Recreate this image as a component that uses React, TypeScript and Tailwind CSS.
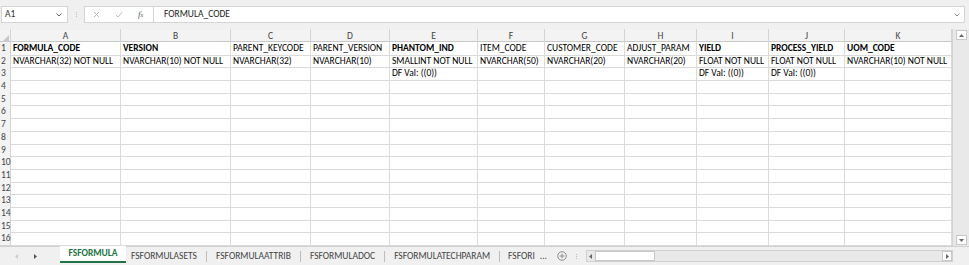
import React from 'react';

const cols = [
  { name: 'A', w: 110 },
  { name: 'B', w: 110 },
  { name: 'C', w: 80 },
  { name: 'D', w: 79 },
  { name: 'E', w: 88 },
  { name: 'F', w: 67 },
  { name: 'G', w: 80 },
  { name: 'H', w: 72 },
  { name: 'I', w: 72 },
  { name: 'J', w: 76 },
  { name: 'K', w: 107 },
];

const headerRow = [
  { t: 'FORMULA_CODE', b: true },
  { t: 'VERSION', b: true },
  { t: 'PARENT_KEYCODE' },
  { t: 'PARENT_VERSION' },
  { t: 'PHANTOM_IND', b: true },
  { t: 'ITEM_CODE' },
  { t: 'CUSTOMER_CODE' },
  { t: 'ADJUST_PARAM' },
  { t: 'YIELD', b: true },
  { t: 'PROCESS_YIELD', b: true },
  { t: 'UOM_CODE', b: true },
];

const typeRow = [
  'NVARCHAR(32) NOT NULL',
  'NVARCHAR(10) NOT NULL',
  'NVARCHAR(32)',
  'NVARCHAR(10)',
  'SMALLINT NOT NULL',
  'NVARCHAR(50)',
  'NVARCHAR(20)',
  'NVARCHAR(20)',
  'FLOAT NOT NULL',
  'FLOAT NOT NULL',
  'NVARCHAR(10) NOT NULL',
];

const dfRow = ['', '', '', '', 'DF Val: ((0))', '', '', '', 'DF Val: ((0))', 'DF Val: ((0))', ''];

const rows: { t: string; b?: boolean }[][] = [
  headerRow,
  typeRow.map((t) => ({ t })),
  dfRow.map((t) => ({ t })),
  ...Array.from({ length: 13 }, () => cols.map(() => ({ t: '' }))),
];

const tabs = ['FSFORMULASETS', 'FSFORMULAATTRIB', 'FSFORMULADOC', 'FSFORMULATECHPARAM'];

const gridCols = 'grid grid-cols-[11px_110px_110px_80px_79px_88px_67px_80px_72px_72px_76px_107px]';

const App = () => {
  return (
    <div
      className="w-[969px] h-[265px] bg-[#f0f0f0] overflow-hidden flex flex-col text-[9.5px] text-black"
      style={{ fontFamily: "Carlito, 'Liberation Sans', Arial, sans-serif" }}
    >
      {/* Formula bar */}
      <div className="h-[29px] flex items-center pl-[1px] pr-[4px]">
        <div className="w-[67px] h-[17px] bg-white border border-[#d4d4d4] flex items-center justify-between pl-[3px] pr-[5px] text-[#333]">
          <span>A1</span>
          <svg width="6" height="4" viewBox="0 0 6 4">
            <path d="M0.5 0.5 L3 3 L5.5 0.5" fill="none" stroke="#666" strokeWidth="1" />
          </svg>
        </div>
        <div className="w-[16px] flex flex-col items-center gap-[1px]">
          <span className="w-[1px] h-[1px] bg-[#bbb]" />
          <span className="w-[1px] h-[1px] bg-[#bbb]" />
          <span className="w-[1px] h-[1px] bg-[#bbb]" />
        </div>
        <div className="h-[17px] w-[70px] bg-white border border-[#d4d4d4] flex items-center gap-[15px] pl-[8px]">
          <svg width="7" height="7" viewBox="0 0 7 7">
            <path d="M1 1 L6 6 M6 1 L1 6" stroke="#b5b5b5" strokeWidth="0.9" />
          </svg>
          <svg width="8" height="7" viewBox="0 0 8 7">
            <path d="M0.8 3.8 L3 6 L7.2 1" fill="none" stroke="#b5b5b5" strokeWidth="0.9" />
          </svg>
          <span className="italic text-[#555] text-[9px]" style={{ fontFamily: "'Liberation Serif', serif" }}>
            f<span className="text-[6px]">x</span>
          </span>
        </div>
        <div className="flex-1 h-[17px] bg-white border border-l-0 border-[#d4d4d4] flex items-center justify-between pl-[10px] pr-[4px] text-[#222]">
          <span>FORMULA_CODE</span>
          <svg width="6" height="4" viewBox="0 0 6 4">
            <path d="M0.5 0.5 L3 3 L5.5 0.5" fill="none" stroke="#777" strokeWidth="0.9" />
          </svg>
        </div>
      </div>

      {/* Sheet area */}
      <div className="flex h-[217px]">
        <div className="w-[952px] bg-white overflow-hidden">
          <div className={`${gridCols} h-[13px] bg-[#f3f3f3] border-b border-[#c8c8c8] text-[#444]`}>
            <div className="border-r border-[#d4d4d4] relative">
              <svg className="absolute right-[1px] bottom-[1px]" width="7" height="7" viewBox="0 0 7 7">
                <path d="M7 0 L7 7 L0 7 Z" fill="#c9c9c9" />
              </svg>
            </div>
            {cols.map((c) => (
              <div key={c.name} className="border-r border-[#d4d4d4] flex items-center justify-center">
                {c.name}
              </div>
            ))}
          </div>
          {rows.map((r, i) => (
            <div key={i} className={`${gridCols} h-[12.7px] leading-[12.7px]`}>
              <div className="bg-[#f3f3f3] border-r border-b border-[#d4d4d4] text-[#444] pl-[1px] whitespace-nowrap">
                {i + 1}
              </div>
              {r.map((c, j) => (
                <div
                  key={j}
                  className={`border-r border-b border-[#dadada] pl-[2px] whitespace-nowrap overflow-hidden ${
                    c.b ? 'font-bold' : ''
                  }`}
                >
                  {c.t}
                </div>
              ))}
            </div>
          ))}
        </div>
        {/* Vertical scrollbar */}
        <div className="w-[17px] bg-[#e9e9e9] border-l border-[#d4d4d4] flex flex-col justify-between items-center py-[1px]">
          <div className="w-[11px] h-[10px] bg-white border border-[#c8c8c8] flex items-center justify-center">
            <svg width="5" height="3" viewBox="0 0 5 3">
              <path d="M0 3 L2.5 0 L5 3 Z" fill="#666" />
            </svg>
          </div>
          <div className="w-[11px] h-[10px] bg-white border border-[#c8c8c8] flex items-center justify-center">
            <svg width="5" height="3" viewBox="0 0 5 3">
              <path d="M0 0 L2.5 3 L5 0 Z" fill="#666" />
            </svg>
          </div>
        </div>
      </div>

      {/* Sheet tabs */}
      <div className="h-[19px] flex items-stretch bg-[#f0f0f0] border-t border-[#d0d0d0] text-[#444]">
        <div className="w-[60px] flex items-center gap-[16px] pl-[15px]">
          <svg width="3" height="5" viewBox="0 0 3 5">
            <path d="M3 0 L0 2.5 L3 5 Z" fill="#ccc" />
          </svg>
          <svg width="3" height="5" viewBox="0 0 3 5">
            <path d="M0 0 L3 2.5 L0 5 Z" fill="#555" />
          </svg>
        </div>
        <div className="w-[66px] h-[17px] -mt-[1px] bg-white border-b-2 border-[#217346] flex items-center justify-center font-bold text-[#217346]">
          FSFORMULA
        </div>
        {tabs.map((t, i) => (
          <div key={t} className="flex items-center">
            <span className={i === 0 ? 'pl-[5px] pr-[9px]' : 'px-[9px]'}>{t}</span>
            <span className="w-[1px] h-[11px] bg-[#bdbdbd]" />
          </div>
        ))}
        <div className="flex items-center pl-[8px] gap-[5px]">
          <span>FSFORI</span>
          <span>...</span>
          <svg width="10" height="10" viewBox="0 0 10 10" className="ml-[5px]">
            <circle cx="5" cy="5" r="4.3" fill="none" stroke="#777" strokeWidth="0.8" />
            <path d="M5 2.6 V7.4 M2.6 5 H7.4" stroke="#777" strokeWidth="0.8" />
          </svg>
          <div className="ml-[4px] flex flex-col gap-[1px]">
            <span className="w-[1px] h-[1px] bg-[#bbb]" />
            <span className="w-[1px] h-[1px] bg-[#bbb]" />
            <span className="w-[1px] h-[1px] bg-[#bbb]" />
          </div>
        </div>
        <div className="flex-1 flex items-center ml-[9px] mr-[16px]">
          <div className="flex-1 h-[12px] bg-[#e9e9e9] border border-[#d0d0d0] flex items-center">
            <div className="w-[8px] h-[10px] flex items-center justify-center">
              <svg width="3" height="5" viewBox="0 0 3 5">
                <path d="M3 0 L0 2.5 L3 5 Z" fill="#666" />
              </svg>
            </div>
            <div className="w-[60px] h-[10px] bg-white border border-[#c8c8c8]" />
            <div className="flex-1" />
            <div className="w-[10px] h-[10px] bg-white border border-[#c8c8c8] flex items-center justify-center">
              <svg width="3" height="5" viewBox="0 0 3 5">
                <path d="M0 0 L3 2.5 L0 5 Z" fill="#666" />
              </svg>
            </div>
          </div>
        </div>
      </div>
    </div>
  );
};

export default App;
